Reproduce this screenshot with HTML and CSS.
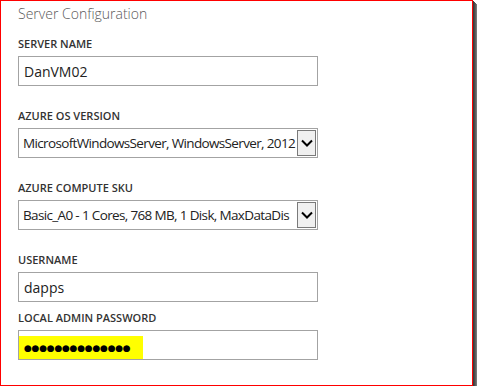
FILE: index.html
```html
<!DOCTYPE html>
<html lang="en">
<head>
  <meta charset="UTF-8">
  <meta name="viewport" content="width=device-width, initial-scale=1.0">
  <title>Server Configuration</title>
  <link rel="stylesheet" href="styles.css">
</head>
<body>
  <div class="frame">
    <h1 class="title">Server Configuration</h1>

    <div class="group">
      <div class="label">Server Name</div>
      <div class="field">DanVM02</div>
    </div>

    <div class="group">
      <div class="label">Azure OS Version</div>
      <div class="field select">
        <span class="value">MicrosoftWindowsServer, WindowsServer, 2012</span>
        <span class="drop">
          <svg width="12" height="8" viewBox="0 0 12 8"><path d="M1 1.5 L6 6.5 L11 1.5" fill="none" stroke="#000" stroke-width="2"/></svg>
        </span>
      </div>
    </div>

    <div class="group">
      <div class="label">Azure Compute SKU</div>
      <div class="field select">
        <span class="value">Basic_A0 - 1 Cores, 768 MB, 1 Disk, MaxDataDis</span>
        <span class="drop">
          <svg width="12" height="8" viewBox="0 0 12 8"><path d="M1 1.5 L6 6.5 L11 1.5" fill="none" stroke="#000" stroke-width="2"/></svg>
        </span>
      </div>
    </div>

    <div class="group">
      <div class="label">Username</div>
      <div class="field">dapps</div>
    </div>

    <div class="group tight">
      <div class="label">Local Admin Password</div>
      <div class="field password">
        <span class="marker">●●●●●●●●●●●●●●</span>
      </div>
    </div>
  </div>
</body>
</html>
```

FILE: styles.css
```css
:root {
  --frame-red: #ff0000;
  --text-color: #222222;
  --label-color: #333333;
  --title-color: #595959;
  --field-border: #a3a3a3;
  --drop-border: #7a7a7a;
  --drop-bg: #f0f0f0;
  --marker: #ffff00;
}

body {
  margin: 0;
  background-color: #ffffff;
  font-family: 'Open Sans', 'Noto Sans', sans-serif;
  color: var(--text-color);
}

.frame {
  width: 473px;
  height: 386px;
  box-sizing: border-box;
  border: 1px solid var(--frame-red);
  padding: 3px 0 0 17px;
  box-shadow:
    1px 1px 0 #3c3c3c,
    2px 2px 0 #4a4a4a,
    3px 3px 0 #5e5e5e,
    4px 4px 0 #767676,
    5px 5px 0 #8e8e8e;
  display: flex;
  flex-direction: column;
}

.title {
  margin: 0;
  font-size: 14px;
  font-weight: 300;
  line-height: 20px;
  color: var(--title-color);
}

.group {
  display: flex;
  flex-direction: column;
  gap: 4px;
  margin-top: 22px;
}

.group:first-of-type {
  margin-top: 12px;
}

.group.tight {
  margin-top: 8px;
}

.label {
  font-size: 11px;
  font-weight: 600;
  line-height: 16px;
  text-transform: uppercase;
  color: var(--label-color);
}

.field {
  width: 300px;
  height: 30px;
  box-sizing: border-box;
  border: 1px solid var(--field-border);
  padding-left: 5px;
  display: flex;
  align-items: center;
  font-size: 14px;
  white-space: nowrap;
  overflow: hidden;
}

/* dropdown lists */
.select {
  padding: 1px 1px 1px 4px;
  align-items: stretch;
}

.select .value {
  flex: 1;
  min-width: 0;
  overflow: hidden;
  display: flex;
  align-items: center;
  font-size: 13.5px;
  letter-spacing: -0.65px;
}

.drop {
  width: 19px;
  flex: none;
  box-sizing: border-box;
  border: 1px solid var(--drop-border);
  background-color: var(--drop-bg);
  display: flex;
  align-items: center;
  justify-content: center;
}

/* password field with the yellow marker */
.password {
  padding-left: 0;
  align-items: flex-end;
}

.marker {
  height: 23px;
  width: 124px;
  box-sizing: border-box;
  padding-left: 5px;
  background-color: var(--marker);
  display: flex;
  align-items: center;
  font-family: 'DejaVu Sans', sans-serif;
  font-size: 9px;
  letter-spacing: -0.25px;
  color: #000000;
}
```
